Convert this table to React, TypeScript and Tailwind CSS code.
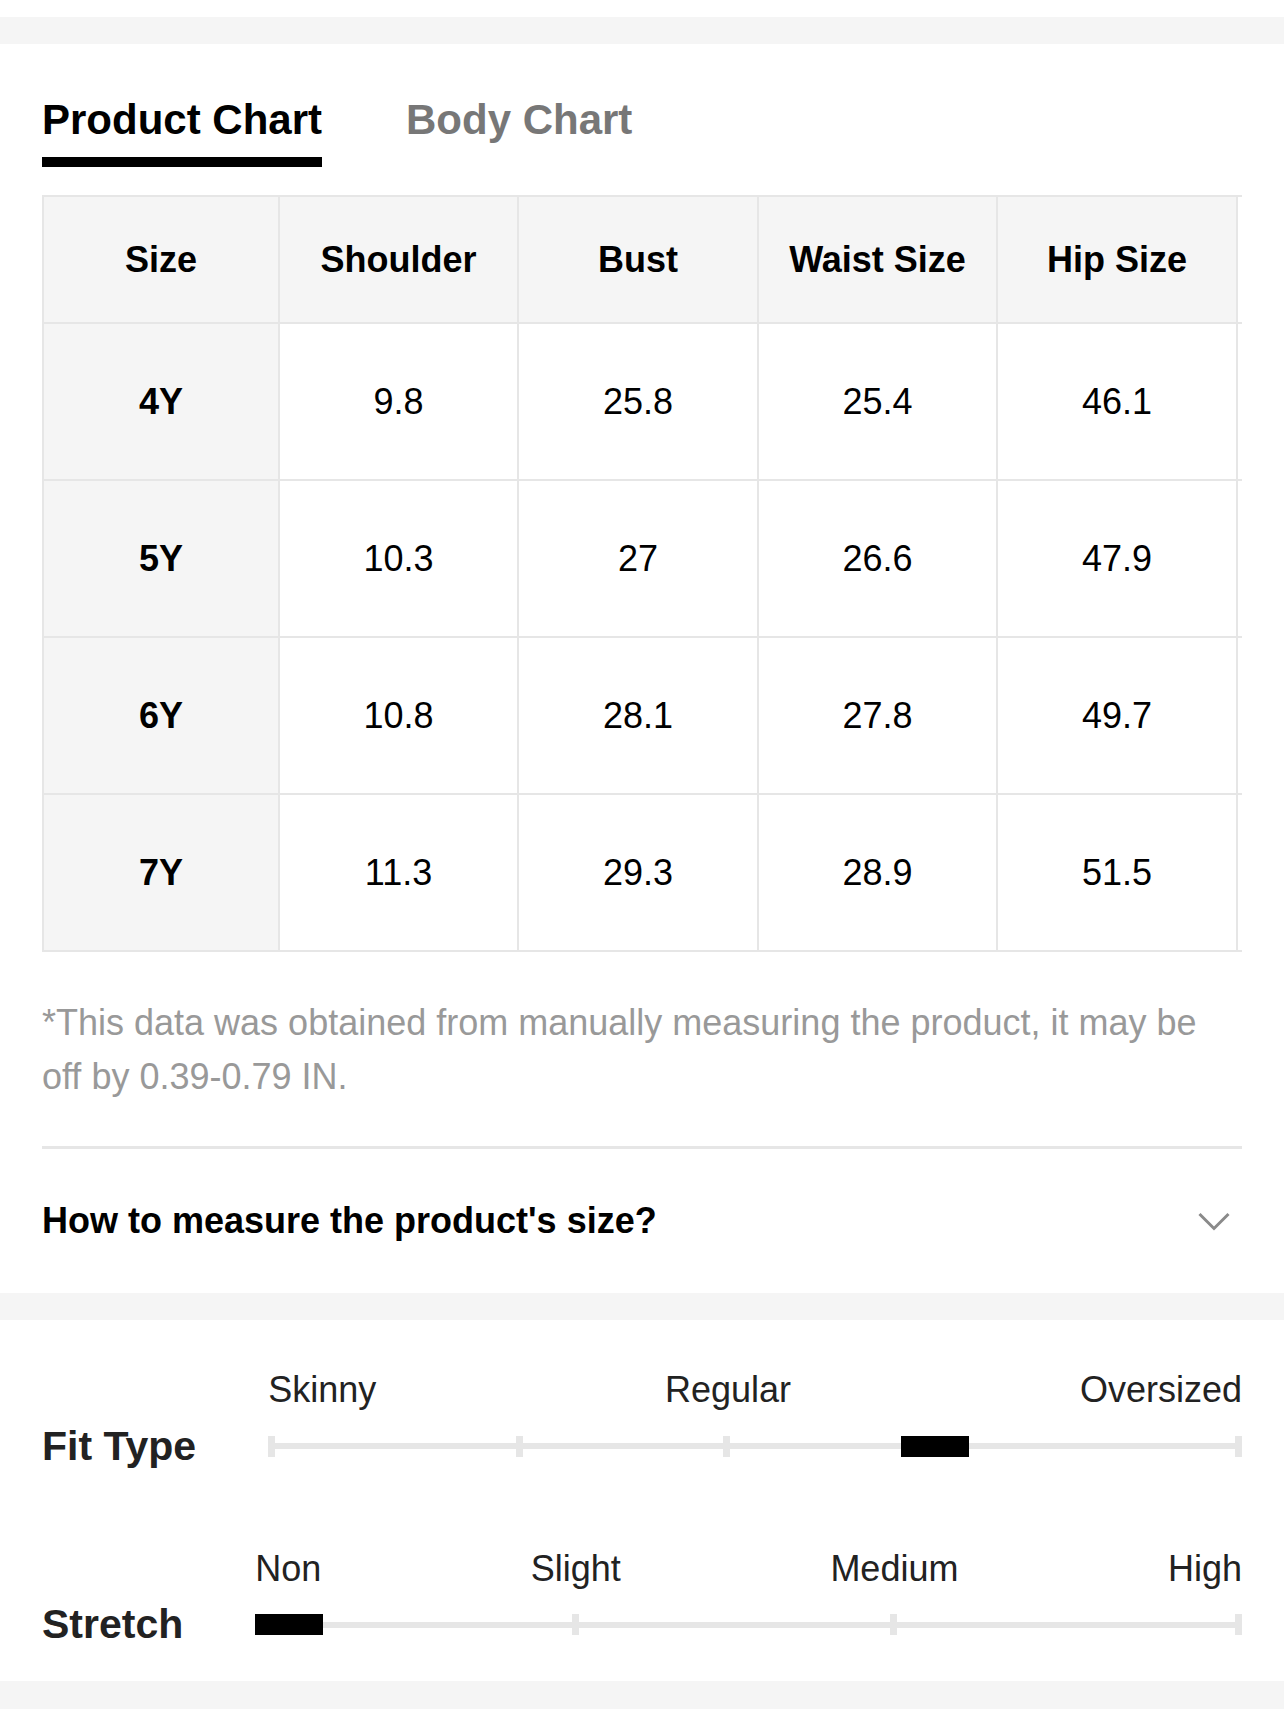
import React from "react";

const headers = ["Size", "Shoulder", "Bust", "Waist Size", "Hip Size", ""];
const rows = [
  ["4Y", "9.8", "25.8", "25.4", "46.1", ""],
  ["5Y", "10.3", "27", "26.6", "47.9", ""],
  ["6Y", "10.8", "28.1", "27.8", "49.7", ""],
  ["7Y", "11.3", "29.3", "28.9", "51.5", ""],
];
const colW = ["w-[236px]", "w-[239px]", "w-[240px]", "w-[239px]", "w-[240px]", "w-[240px]"];

type SliderProps = {
  title: string;
  labels: string[];
  ticks: number[];
  thumb: number;
  className?: string;
};

function Slider({ title, labels, ticks, thumb, className }: SliderProps) {
  return (
    <div className={"grid grid-cols-[auto_1fr] gap-x-[72px] " + (className ?? "")}>
      <div />
      <div className="flex justify-between text-[36px] leading-[42px] text-[#222]">
        {labels.map((l) => (
          <span key={l}>{l}</span>
        ))}
      </div>
      <div className="self-end whitespace-nowrap text-[41px] font-bold leading-[21px] text-[#222]">{title}</div>
      <div className="relative mt-[24.5px] h-[21px]">
        <div className="absolute inset-x-0 top-[7.5px] h-[6px] bg-[#e6e6e6]" />
        <div className="absolute left-0 top-0 h-full w-[7px] bg-[#e6e6e6]" />
        {ticks.map((t) => (
          <div key={t} className="absolute top-0 h-full w-[7px] bg-[#e6e6e6]" style={{ left: `${t}%` }} />
        ))}
        <div className="absolute right-0 top-0 h-full w-[7px] bg-[#e6e6e6]" />
        <div className="absolute top-0 h-full w-[68px] bg-black" style={{ left: `${thumb}%` }} />
      </div>
    </div>
  );
}

export default function App() {
  return (
    <div className="min-h-[1719px] bg-white font-['Liberation_Sans',Arial,Helvetica,sans-serif]">
      <div className="h-[17px]" />
      <div className="h-[27px] bg-[#f5f5f5]" />

      <section className="px-[42px]">
        <div className="flex gap-[84px] pt-[55px]">
          <div className="flex flex-col">
            <span className="text-[42px] font-bold leading-[42px] text-black">Product Chart</span>
            <div className="mt-[16px] h-[10px] bg-black" />
          </div>
          <span className="text-[42px] font-bold leading-[42px] text-[#777]">Body Chart</span>
        </div>

        <div className="mt-[28px] overflow-hidden">
          <div className="grid w-max grid-cols-[236px_239px_240px_239px_240px_240px] border-l-2 border-t-2 border-[#e6e6e6]">
            {headers.map((h, i) => (
              <div
                key={"h" + i}
                className={
                  "flex h-[127px] items-center justify-center border-b-2 border-r-2 border-[#e6e6e6] text-[36px] font-bold text-black " +
                  colW[i] +
                  (i === 5 ? " bg-white" : " bg-[#f5f5f5]")
                }
              >
                {h}
              </div>
            ))}
            {rows.map((r) =>
              r.map((v, i) => (
                <div
                  key={r[0] + i}
                  className={
                    "flex h-[157px] items-center justify-center border-b-2 border-r-2 border-[#e6e6e6] text-[36px] text-black " +
                    colW[i] +
                    (i === 0 ? " bg-[#f5f5f5] font-bold" : " bg-white")
                  }
                >
                  {v}
                </div>
              ))
            )}
          </div>
        </div>

        <p className="mt-[44px] max-w-[1175px] text-[36px] leading-[54px] text-[#999]">
          *This data was obtained from manually measuring the product, it may be off by 0.39-0.79 IN.
        </p>

        <div className="mt-[42px] h-[3px] bg-[#e6e6e6]" />

        <div className="flex h-[144px] items-center justify-between">
          <span className="text-[36px] font-bold text-black">How to measure the product's size?</span>
          <svg width="32" height="19" viewBox="0 0 32 19" className="mr-[12px]" fill="none">
            <path d="M1.5 2 L16 16.5 L30.5 2" stroke="#8a8a8a" strokeWidth="3" />
          </svg>
        </div>
      </section>

      <div className="h-[27px] bg-[#f5f5f5]" />

      <section className="px-[42px] pb-[45.5px] pt-[49px]">
        <Slider title="Fit Type" labels={["Skinny", "Regular", "Oversized"]} ticks={[25.46, 46.74]} thumb={65} />
        <Slider
          title="Stretch"
          labels={["Non", "Slight", "Medium", "High"]}
          ticks={[32.07, 64.33]}
          thumb={0}
          className="mt-[91px]"
        />
      </section>

      <div className="h-[28px] bg-[#f5f5f5]" />
    </div>
  );
}
